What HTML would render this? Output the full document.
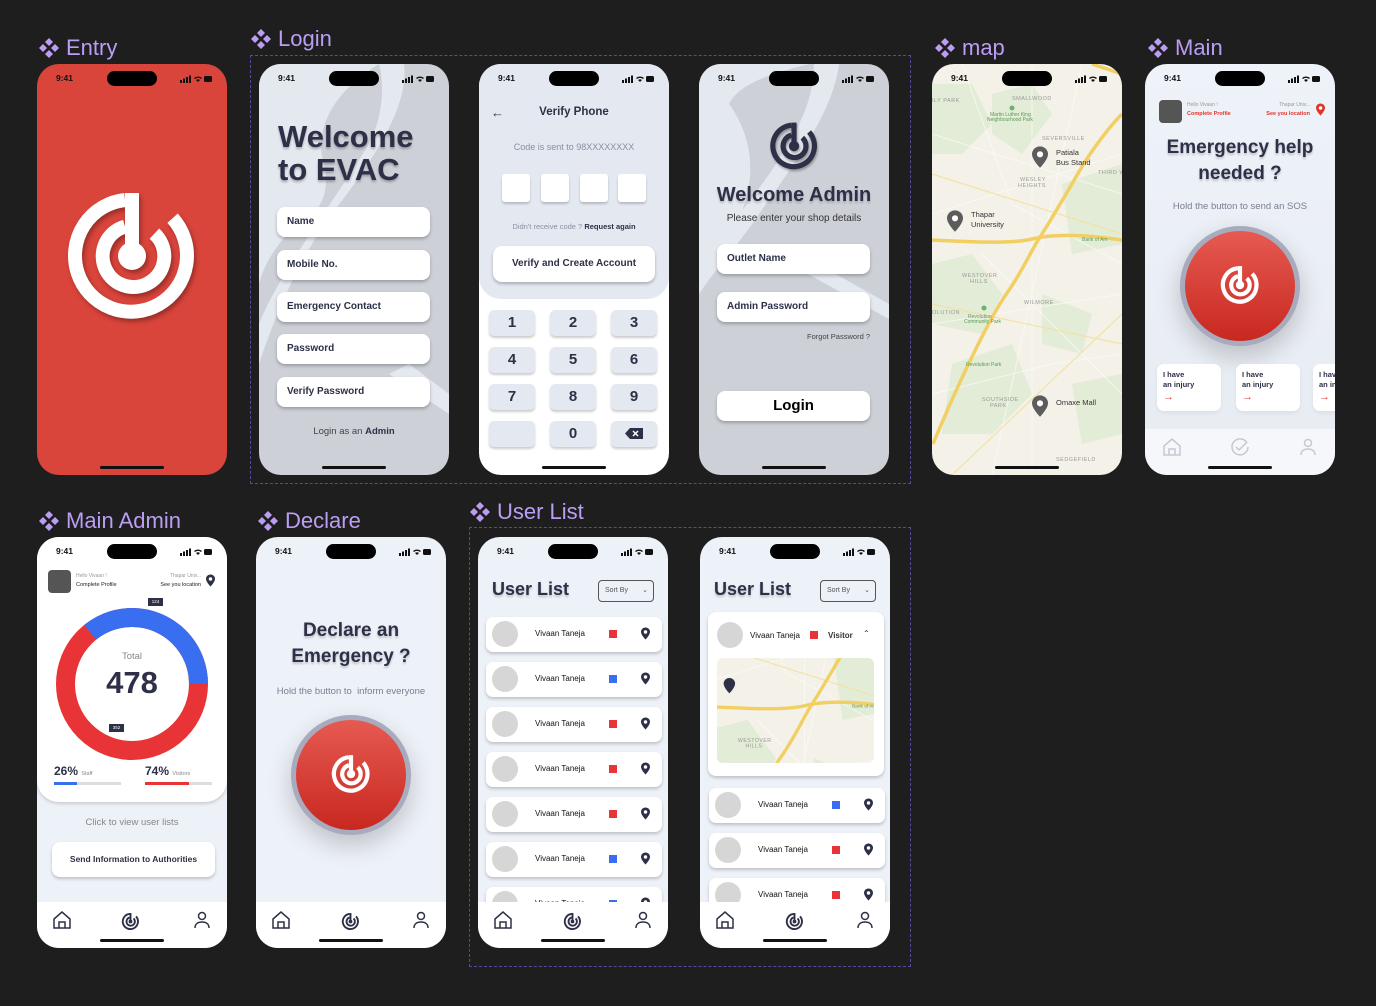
<!DOCTYPE html>
<html><head><meta charset="utf-8">
<style>
*{margin:0;padding:0;box-sizing:border-box}
body{width:1376px;height:1006px;background:#1e1e1e;position:relative;overflow:hidden;font-family:"Liberation Sans",sans-serif}
.lb{position:absolute;color:#bb9ef3;font-size:22px;display:flex;align-items:center;gap:6px;line-height:24px}
.lb svg{width:22px;height:22px}
.grp{position:absolute;border:1px dashed #5d45a0}
.ph{position:absolute;width:190px;height:411px;border-radius:22px;overflow:hidden;color:#2d3047}
.t{position:absolute;left:19px;top:9px;font-size:8.5px;font-weight:bold;color:#111;z-index:5}
.isl{position:absolute;left:70px;top:7px;width:50px;height:15px;border-radius:8px;background:#000;z-index:5}
.si{position:absolute;right:15px;top:11px;z-index:5}
.hi{position:absolute;left:63px;bottom:6px;width:64px;height:3px;border-radius:2px;background:#111;z-index:6}
.in{position:absolute;left:18px;width:153px;height:30px;background:#fff;border-radius:8px;box-shadow:0 2px 3px rgba(0,0,0,.25);font-size:10px;font-weight:bold;line-height:30px;padding-left:10px;color:#2d3047}
.key{position:absolute;width:46px;height:26px;background:#e4e8f0;border-radius:5px;box-shadow:0 2px 2px rgba(0,0,0,.2);font-size:15px;font-weight:bold;text-align:center;line-height:26px;color:#2d3047}
.nav{position:absolute;left:0;top:365px;width:190px;height:46px;background:#fff}
.nav svg{position:absolute;top:8px}
.row{position:absolute;left:8px;width:176px;height:35px;background:#fff;border-radius:7px;box-shadow:0 2px 3px rgba(0,0,0,.2)}
.row .av{position:absolute;left:6px;top:4px;width:26px;height:26px;border-radius:50%;background:#d6d6d6}
.row .nm{position:absolute;left:49px;top:12px;font-size:8px;color:#111}
.row .sq{position:absolute;left:123px;top:13px;width:8px;height:8px}
.row svg{position:absolute;left:155px;top:10px}
.card{position:absolute;width:64px;height:47px;background:#fff;border-radius:7px;font-size:7.5px;font-weight:bold;padding:6px 6px;line-height:10px;color:#2d3047;box-shadow:0 2px 4px rgba(0,0,0,.06)}
.card b{display:block;color:#e23a2f;font-size:11px;margin-top:2px}
</style></head><body>
<svg width="0" height="0" style="position:absolute">
<defs>
<symbol id="lg" viewBox="0 0 100 100"><g fill="none" stroke="currentColor" stroke-width="10"><path d="M45 10 A40 40 0 1 0 79 23"/><path d="M45 29 A22 22 0 1 0 66 34"/><path d="M50 5 V50"/></g><circle cx="50" cy="50" r="10" fill="currentColor"/></symbol>
<symbol id="dia" viewBox="0 0 22 22"><g fill="#bb9ef3"><path d="M11 1l4 4-4 4-4-4z"/><path d="M11 13l4 4-4 4-4-4z"/><path d="M5 7l4 4-4 4-4-4z"/><path d="M17 7l4 4-4 4-4-4z"/></g></symbol>
<symbol id="pin" viewBox="0 0 12 16"><path d="M6 0C2.7 0 0 2.6 0 5.8 0 10 6 16 6 16s6-6 6-10.2C12 2.6 9.3 0 6 0z" fill="currentColor"/><circle cx="6" cy="6" r="2.3" fill="#fff"/></symbol>
<symbol id="home" viewBox="0 0 20 20"><path d="M2 9L10 2l8 7v9H2z M7 18v-6h6v6" fill="none" stroke="currentColor" stroke-width="1.5"/></symbol>
<symbol id="usr" viewBox="0 0 20 20"><circle cx="10" cy="6" r="3.5" fill="none" stroke="currentColor" stroke-width="1.5"/><path d="M3 18c0-4 3-6 7-6s7 2 7 6" fill="none" stroke="currentColor" stroke-width="1.5"/></symbol>
<symbol id="chk" viewBox="0 0 20 20"><path d="M17 6A8 8 0 1 0 18 10" fill="none" stroke="currentColor" stroke-width="1.5"/><path d="M6 10l3 3 8-8" fill="none" stroke="currentColor" stroke-width="1.5"/></symbol>
<symbol id="sb" viewBox="0 0 32 8"><g fill="#111"><rect x="0" y="5" width="2" height="3"/><rect x="3" y="3.5" width="2" height="4.5"/><rect x="6" y="2" width="2" height="6"/><rect x="9" y="0.5" width="2" height="7.5"/><path d="M14 3a6 6 0 0 1 8 0l-1 1a4.5 4.5 0 0 0-6 0z M16 5a3 3 0 0 1 4 0l-2 2z"/><rect x="24" y="1" width="8" height="6" rx="1.5"/></g></symbol>
<g id="mapg">
<rect width="190" height="411" fill="#f4f1e8"/>
<g fill="#e2ecd6"><path d="M0 20h40l20 40-30 30H0z"/><path d="M60 30l40-10 20 30-30 40-30-20z"/><path d="M130 120l60-20v80l-50 10z"/><path d="M0 200l40-10 30 40-20 40-50-10z"/><path d="M20 300l60-20 20 50-40 40H10z"/><path d="M110 230l50 20-10 40-40-10z"/><path d="M140 320l50-10v60l-40 10z"/></g>
<g fill="none" stroke="#fbfaf6" stroke-width="1" opacity=".8"><path d="M0 70L190 130"/><path d="M30 0L80 140 190 200"/><path d="M0 260L190 230"/><path d="M50 190L190 330"/><path d="M0 330L120 300 190 290"/><path d="M100 0V411"/><path d="M0 150L190 90"/><path d="M150 0L60 411"/></g>
<g fill="none" stroke="#f3e2a6" stroke-width="1.2"><path d="M0 110L190 170"/><path d="M20 411L190 250"/><path d="M0 240L190 280"/></g>
<g fill="none" stroke="#f1cf63" stroke-width="3.5"><path d="M1 380C30 310 60 250 75 229S100 185 108 173 140 120 148 106 175 65 190 50"/><path d="M0 176C40 178 80 180 100 175S150 170 190 176"/><path d="M190 10L160 0"/></g>
<g font-size="5.5" fill="#999" font-family="Liberation Sans,sans-serif" letter-spacing=".5"><text x="80" y="36">SMALLWOOD</text><text x="110" y="76">SEVERSVILLE</text><text x="88" y="117">WESLEY</text><text x="86" y="123">HEIGHTS</text><text x="30" y="213">WESTOVER</text><text x="38" y="219">HILLS</text><text x="92" y="240">WILMORE</text><text x="0" y="250">OLUTION</text><text x="50" y="337">SOUTHSIDE</text><text x="58" y="343">PARK</text><text x="124" y="397">SEDGEFIELD</text><text x="0" y="38">ILY PARK</text><text x="166" y="110">THIRD W</text></g>
<g font-size="5" fill="#5a9a5a" font-family="Liberation Sans,sans-serif"><text x="58" y="52">Martin Luther King</text><text x="55" y="57">Neighbourhood Park</text><text x="36" y="254">Revolution</text><text x="32" y="259">Community Park</text><text x="34" y="302">Revolution Park</text><circle cx="80" cy="44" r="2.5" fill="#6bb26b"/><circle cx="52" cy="244" r="2.5" fill="#6bb26b"/><text x="150" y="177">Bank of Am</text></g>
</g>
</defs></svg>

<div class="lb" style="left:38px;top:36px"><svg><use href="#dia"/></svg>Entry</div>
<div class="lb" style="left:250px;top:27px"><svg><use href="#dia"/></svg>Login</div>
<div class="lb" style="left:934px;top:36px"><svg><use href="#dia"/></svg>map</div>
<div class="lb" style="left:1147px;top:36px"><svg><use href="#dia"/></svg>Main</div>
<div class="lb" style="left:38px;top:509px"><svg><use href="#dia"/></svg>Main Admin</div>
<div class="lb" style="left:257px;top:509px"><svg><use href="#dia"/></svg>Declare</div>
<div class="lb" style="left:469px;top:500px"><svg><use href="#dia"/></svg>User List</div>
<div class="grp" style="left:250px;top:55px;width:661px;height:429px"></div>
<div class="grp" style="left:469px;top:527px;width:442px;height:440px"></div>

<div class="ph" style="left:37px;top:64px;background:#d9443b">
<span class="t">9:41</span><i class="isl"></i><svg class="si" width="32" height="8"><use href="#sb"/></svg>
<svg style="position:absolute;left:25px;top:122px;color:#fff;filter:drop-shadow(2px 3px 2px rgba(0,0,0,.3))" width="140" height="140"><use href="#lg"/></svg>
<i class="hi"></i></div>

<div class="ph" style="left:259px;top:64px;background:#cdd0d7">
<svg style="position:absolute;left:0;top:0" width="190" height="411"><path d="M0 0H120C70 30 55 70 65 100 72 130 60 150 40 160 20 175 5 200 0 220Z" fill="#e4e8ef"/><path d="M120 0H145C150 40 120 90 65 160 40 200 20 240 0 300V260C20 210 60 160 110 80 125 50 125 20 120 0Z" fill="#e4e8ef"/><path d="M150 300L190 330V350L130 310Z" fill="#e4e8ef"/></svg>
<span class="t">9:41</span><i class="isl"></i><svg class="si" width="32" height="8"><use href="#sb"/></svg>
<div style="position:absolute;left:19px;top:56px;font-size:31px;font-weight:bold;line-height:33px;color:#2d3047;text-shadow:0 2px 2px rgba(0,0,0,.25)">Welcome<br>to EVAC</div>
<div class="in" style="top:143px">Name</div>
<div class="in" style="top:186px">Mobile No.</div>
<div class="in" style="top:228px">Emergency Contact</div>
<div class="in" style="top:270px">Password</div>
<div class="in" style="top:313px">Verify Password</div>
<div style="position:absolute;left:0;width:190px;top:362px;text-align:center;font-size:9.5px;color:#444">Login as an <b style="color:#2d3047">Admin</b></div>
<i class="hi"></i></div>

<div class="ph" style="left:479px;top:64px;background:#fff">
<div style="position:absolute;left:0;top:0;width:190px;height:235px;background:#e4e8f0;border-radius:0 0 22px 22px"></div>
<span class="t">9:41</span><i class="isl"></i><svg class="si" width="32" height="8"><use href="#sb"/></svg>
<div style="position:absolute;left:12px;top:41px;font-size:13px;color:#333">&#8592;</div>
<div style="position:absolute;left:0;width:190px;top:42px;text-align:center;font-size:11.5px;font-weight:bold">Verify Phone</div>
<div style="position:absolute;left:0;width:190px;top:78px;text-align:center;font-size:9px;color:#8a8ea0">Code is sent to 98XXXXXXXX</div>
<div style="position:absolute;left:23px;top:110px;width:28px;height:28px;background:#fff;border-radius:3px;box-shadow:0 2px 2px rgba(0,0,0,.2)"></div>
<div style="position:absolute;left:62px;top:110px;width:28px;height:28px;background:#fff;border-radius:3px;box-shadow:0 2px 2px rgba(0,0,0,.2)"></div>
<div style="position:absolute;left:101px;top:110px;width:28px;height:28px;background:#fff;border-radius:3px;box-shadow:0 2px 2px rgba(0,0,0,.2)"></div>
<div style="position:absolute;left:139px;top:110px;width:28px;height:28px;background:#fff;border-radius:3px;box-shadow:0 2px 2px rgba(0,0,0,.2)"></div>
<div style="position:absolute;left:0;width:190px;top:158px;text-align:center;font-size:7.5px;color:#8a8ea0">Didn't receive code ? <b style="color:#2d3047">Request again</b></div>
<div style="position:absolute;left:14px;top:182px;width:162px;height:36px;background:#fff;border-radius:9px;box-shadow:0 2px 3px rgba(0,0,0,.25);text-align:center;line-height:36px;font-size:10px;font-weight:bold">Verify and Create Account</div>
<div class="key" style="left:10px;top:246px">1</div><div class="key" style="left:71px;top:246px">2</div><div class="key" style="left:132px;top:246px">3</div>
<div class="key" style="left:10px;top:283px">4</div><div class="key" style="left:71px;top:283px">5</div><div class="key" style="left:132px;top:283px">6</div>
<div class="key" style="left:10px;top:320px">7</div><div class="key" style="left:71px;top:320px">8</div><div class="key" style="left:132px;top:320px">9</div>
<div class="key" style="left:10px;top:357px"></div><div class="key" style="left:71px;top:357px">0</div><div class="key" style="left:132px;top:357px"><svg width="18" height="11" style="margin-top:7px"><path d="M5 0H18V11H5L0 5.5Z" fill="#2d3047"/><path d="M8 3l5 5M13 3l-5 5" stroke="#fff" stroke-width="1.5"/></svg></div>
<i class="hi"></i></div>

<div class="ph" style="left:699px;top:64px;background:#cdd0d7">
<svg style="position:absolute;left:0;top:0" width="190" height="411"><path d="M0 0H110C70 10 40 20 30 40 45 60 55 90 50 120 45 150 35 170 15 190 5 200 0 220 0 230Z" fill="#e4e8ef"/><path d="M115 0H140C135 40 110 80 60 150 40 180 20 200 0 230V200C30 160 70 120 100 60 110 40 115 20 115 0Z" fill="#e4e8ef"/><path d="M110 195L190 240V255L100 205Z" fill="#e4e8ef"/></svg>
<span class="t">9:41</span><i class="isl"></i><svg class="si" width="32" height="8"><use href="#sb"/></svg>
<svg style="position:absolute;left:69px;top:56px;color:#2d3047;filter:drop-shadow(1px 2px 1px rgba(0,0,0,.3))" width="52" height="52"><use href="#lg"/></svg>
<div style="position:absolute;left:0;width:190px;top:120px;text-align:center;font-size:20px;font-weight:bold;text-shadow:0 2px 2px rgba(0,0,0,.2)">Welcome Admin</div>
<div style="position:absolute;left:0;width:190px;top:149px;text-align:center;font-size:10px;color:#333">Please enter your shop details</div>
<div class="in" style="top:180px">Outlet Name</div>
<div class="in" style="top:228px">Admin Password</div>
<div style="position:absolute;right:19px;top:268px;font-size:7.5px;color:#444">Forgot Password ?</div>
<div style="position:absolute;left:18px;top:327px;width:153px;height:30px;background:#fff;border-radius:8px;box-shadow:0 2px 3px rgba(0,0,0,.25);text-align:center;line-height:30px;font-size:15px;font-weight:bold;color:#000">Login</div>
<i class="hi"></i></div>

<div class="ph" style="left:932px;top:64px">
<svg style="position:absolute;left:0;top:0" width="190" height="411"><use href="#mapg"/></svg>
<span class="t">9:41</span><i class="isl"></i><svg class="si" width="32" height="8"><use href="#sb"/></svg>
<svg style="position:absolute;left:100px;top:82px;color:#5c5c5c" width="16" height="22"><use href="#pin"/></svg>
<div style="position:absolute;left:124px;top:84px;font-size:7.5px;line-height:10px;color:#333">Patiala<br>Bus Stand</div>
<svg style="position:absolute;left:15px;top:146px;color:#5c5c5c" width="16" height="22"><use href="#pin"/></svg>
<div style="position:absolute;left:39px;top:146px;font-size:7.5px;line-height:10px;color:#333">Thapar<br>University</div>
<svg style="position:absolute;left:100px;top:331px;color:#5c5c5c" width="16" height="22"><use href="#pin"/></svg>
<div style="position:absolute;left:124px;top:334px;font-size:7.5px;color:#333">Omaxe Mall</div>
<i class="hi"></i></div>

<div class="ph" style="left:1145px;top:64px;background:linear-gradient(#eef2f9,#e7ebf2)">
<span class="t">9:41</span><i class="isl"></i><svg class="si" width="32" height="8"><use href="#sb"/></svg>
<div style="position:absolute;left:14px;top:36px;width:23px;height:23px;border-radius:4px;background:#555"></div>
<div style="position:absolute;left:42px;top:38px;font-size:5px;color:#999">Hello Vivaan !</div>
<div style="position:absolute;left:42px;top:47px;font-size:5.5px;color:#e2352b;font-weight:bold">Complete Profile</div>
<div style="position:absolute;right:25px;top:38px;font-size:5px;color:#999">Thapar Univ...</div>
<div style="position:absolute;right:25px;top:47px;font-size:5.5px;color:#e2352b;font-weight:bold">See you location</div>
<svg style="position:absolute;left:171px;top:39px;color:#e2352b" width="9" height="13"><use href="#pin"/></svg>
<div style="position:absolute;left:0;width:190px;top:71px;text-align:center;font-size:19px;font-weight:bold;line-height:26px;text-shadow:0 2px 2px rgba(0,0,0,.2)">Emergency help<br>needed ?</div>
<div style="position:absolute;left:0;width:190px;top:137px;text-align:center;font-size:9.5px;color:#7a7e92">Hold the button to send an SOS</div>
<div style="position:absolute;left:35px;top:162px;width:120px;height:120px;border-radius:50%;background:#a8abbd;box-shadow:0 10px 25px rgba(0,0,0,.2)"></div>
<div style="position:absolute;left:40px;top:167px;width:110px;height:110px;border-radius:50%;background:linear-gradient(#e65a52,#c8281f)"></div>
<svg style="position:absolute;left:74px;top:200px;color:#fff" width="42" height="42"><use href="#lg"/></svg>
<div class="card" style="left:12px;top:300px">I have<br>an injury<b>&#8594;</b></div>
<div class="card" style="left:91px;top:300px">I have<br>an injury<b>&#8594;</b></div>
<div class="card" style="left:168px;top:300px">I have<br>an injury<b>&#8594;</b></div>
<div class="nav" style="background:#f6f7fa"><svg style="left:17px;color:#c5c8d2" width="20" height="20"><use href="#home"/></svg><svg style="left:85px;color:#c5c8d2" width="20" height="20"><use href="#chk"/></svg><svg style="left:153px;color:#c5c8d2" width="20" height="20"><use href="#usr"/></svg></div>
<i class="hi"></i></div>

<div class="ph" style="left:37px;top:537px;background:#edf1f8">
<div style="position:absolute;left:0;top:0;width:190px;height:265px;background:#fff;border-radius:0 0 22px 22px;box-shadow:0 2px 3px rgba(0,0,0,.15)"></div>
<span class="t">9:41</span><i class="isl"></i><svg class="si" width="32" height="8"><use href="#sb"/></svg>
<div style="position:absolute;left:11px;top:33px;width:23px;height:23px;border-radius:4px;background:#555"></div>
<div style="position:absolute;left:39px;top:36px;font-size:5px;color:#999">Hello Vivaan !</div>
<div style="position:absolute;left:39px;top:45px;font-size:5.5px;color:#222">Complete Profile</div>
<div style="position:absolute;right:26px;top:36px;font-size:5px;color:#999">Thapar Univ...</div>
<div style="position:absolute;right:26px;top:45px;font-size:5.5px;color:#222">See you location</div>
<svg style="position:absolute;left:169px;top:37px;color:#2d3047" width="9" height="13"><use href="#pin"/></svg>
<svg style="position:absolute;left:15px;top:67px" width="160" height="160"><circle cx="80" cy="80" r="66.5" fill="none" stroke="#e83436" stroke-width="19"/><circle cx="80" cy="80" r="66.5" fill="none" stroke="#3a6ef0" stroke-width="19" stroke-dasharray="149.7 500" transform="rotate(-129 80 80)"/></svg>
<div style="position:absolute;left:0;width:190px;top:114px;text-align:center;font-size:9.5px;color:#888">Total</div>
<div style="position:absolute;left:0;width:190px;top:128px;text-align:center;font-size:31px;font-weight:bold;color:#2d3047">478</div>
<div style="position:absolute;left:111px;top:61px;width:15px;height:8px;background:#2d3047;color:#fff;font-size:4.5px;text-align:center;line-height:8px">124</div>
<div style="position:absolute;left:72px;top:187px;width:15px;height:8px;background:#2d3047;color:#fff;font-size:4.5px;text-align:center;line-height:8px">352</div>
<div style="position:absolute;left:17px;top:227px;font-size:12px;font-weight:bold">26% <span style="font-size:5.5px;font-weight:normal;color:#888">Staff</span></div>
<div style="position:absolute;left:17px;top:245px;width:67px;height:3px;background:#ddd"><i style="display:block;width:23px;height:3px;background:#3a6ef0"></i></div>
<div style="position:absolute;left:108px;top:227px;font-size:12px;font-weight:bold">74% <span style="font-size:5.5px;font-weight:normal;color:#888">Visitors</span></div>
<div style="position:absolute;left:108px;top:245px;width:67px;height:3px;background:#ddd"><i style="display:block;width:44px;height:3px;background:#e83436"></i></div>
<div style="position:absolute;left:0;width:190px;top:280px;text-align:center;font-size:9.5px;color:#888">Click to view user lists</div>
<div style="position:absolute;left:15px;top:305px;width:163px;height:35px;background:#fff;border-radius:8px;box-shadow:0 2px 3px rgba(0,0,0,.2);text-align:center;line-height:35px;font-size:8.5px;font-weight:bold">Send Information to Authorities</div>
<div class="nav"><svg style="left:15px;color:#2d3047" width="20" height="20"><use href="#home"/></svg><svg style="left:84px;top:10px;color:#2d3047" width="19" height="19"><use href="#lg"/></svg><svg style="left:155px;color:#2d3047" width="20" height="20"><use href="#usr"/></svg></div>
<i class="hi"></i></div>

<div class="ph" style="left:256px;top:537px;background:#edf1f8">
<span class="t">9:41</span><i class="isl"></i><svg class="si" width="32" height="8"><use href="#sb"/></svg>
<div style="position:absolute;left:0;width:190px;top:81px;text-align:center;font-size:19px;font-weight:bold;line-height:26px;text-shadow:0 2px 2px rgba(0,0,0,.2)">Declare an<br>Emergency ?</div>
<div style="position:absolute;left:0;width:190px;top:149px;text-align:center;font-size:9.5px;color:#7a7e92">Hold the button to &nbsp;inform everyone</div>
<div style="position:absolute;left:35px;top:178px;width:120px;height:120px;border-radius:50%;background:#a8abbd;box-shadow:0 10px 25px rgba(0,0,0,.2)"></div>
<div style="position:absolute;left:40px;top:183px;width:110px;height:110px;border-radius:50%;background:linear-gradient(#e65a52,#c8281f)"></div>
<svg style="position:absolute;left:74px;top:216px;color:#fff" width="42" height="42"><use href="#lg"/></svg>
<div class="nav"><svg style="left:15px;color:#2d3047" width="20" height="20"><use href="#home"/></svg><svg style="left:85px;top:10px;color:#2d3047" width="19" height="19"><use href="#lg"/></svg><svg style="left:155px;color:#2d3047" width="20" height="20"><use href="#usr"/></svg></div>
<i class="hi"></i></div>

<div class="ph" style="left:478px;top:537px;background:#edf1f8">
<span class="t">9:41</span><i class="isl"></i><svg class="si" width="32" height="8"><use href="#sb"/></svg>
<div style="position:absolute;left:14px;top:42px;font-size:18px;font-weight:bold;text-shadow:0 2px 2px rgba(0,0,0,.2)">User List</div>
<div style="position:absolute;left:120px;top:43px;width:56px;height:22px;border:1px solid #555;border-radius:4px;font-size:7px;line-height:20px;padding-left:6px;color:#555">Sort By <span style="position:absolute;right:5px">&#8964;</span></div>
<div class="row" style="top:80px"><i class="av"></i><span class="nm">Vivaan Taneja</span><i class="sq" style="background:#e83436"></i><svg width="9" height="13" style="color:#2d3047"><use href="#pin"/></svg></div>
<div class="row" style="top:125px"><i class="av"></i><span class="nm">Vivaan Taneja</span><i class="sq" style="background:#3a6ef0"></i><svg width="9" height="13" style="color:#2d3047"><use href="#pin"/></svg></div>
<div class="row" style="top:170px"><i class="av"></i><span class="nm">Vivaan Taneja</span><i class="sq" style="background:#e83436"></i><svg width="9" height="13" style="color:#2d3047"><use href="#pin"/></svg></div>
<div class="row" style="top:215px"><i class="av"></i><span class="nm">Vivaan Taneja</span><i class="sq" style="background:#e83436"></i><svg width="9" height="13" style="color:#2d3047"><use href="#pin"/></svg></div>
<div class="row" style="top:260px"><i class="av"></i><span class="nm">Vivaan Taneja</span><i class="sq" style="background:#e83436"></i><svg width="9" height="13" style="color:#2d3047"><use href="#pin"/></svg></div>
<div class="row" style="top:305px"><i class="av"></i><span class="nm">Vivaan Taneja</span><i class="sq" style="background:#3a6ef0"></i><svg width="9" height="13" style="color:#2d3047"><use href="#pin"/></svg></div>
<div class="row" style="top:350px"><i class="av"></i><span class="nm">Vivaan Taneja</span><i class="sq" style="background:#3a6ef0"></i><svg width="9" height="13" style="color:#2d3047"><use href="#pin"/></svg></div>
<div class="nav"><svg style="left:15px;color:#2d3047" width="20" height="20"><use href="#home"/></svg><svg style="left:85px;top:10px;color:#2d3047" width="19" height="19"><use href="#lg"/></svg><svg style="left:155px;color:#2d3047" width="20" height="20"><use href="#usr"/></svg></div>
<i class="hi"></i></div>

<div class="ph" style="left:700px;top:537px;background:#edf1f8">
<span class="t">9:41</span><i class="isl"></i><svg class="si" width="32" height="8"><use href="#sb"/></svg>
<div style="position:absolute;left:14px;top:42px;font-size:18px;font-weight:bold;text-shadow:0 2px 2px rgba(0,0,0,.2)">User List</div>
<div style="position:absolute;left:120px;top:43px;width:56px;height:22px;border:1px solid #555;border-radius:4px;font-size:7px;line-height:20px;padding-left:6px;color:#555">Sort By <span style="position:absolute;right:5px">&#8964;</span></div>
<div style="position:absolute;left:8px;top:75px;width:176px;height:164px;background:#fff;border-radius:8px;box-shadow:0 2px 3px rgba(0,0,0,.2)">
<i style="position:absolute;left:9px;top:10px;width:26px;height:26px;border-radius:50%;background:#d6d6d6"></i>
<span style="position:absolute;left:42px;top:19px;font-size:8px;color:#111">Vivaan Taneja</span>
<i style="position:absolute;left:102px;top:19px;width:8px;height:8px;background:#e83436"></i>
<span style="position:absolute;left:120px;top:19px;font-size:8px;color:#333;font-weight:bold">Visitor</span>
<span style="position:absolute;left:155px;top:17px;font-size:8px;color:#333">&#8963;</span>
<svg style="position:absolute;left:9px;top:46px;border-radius:6px" width="157" height="105" viewBox="8 125 165 110" preserveAspectRatio="none"><use href="#mapg"/><g transform="translate(15 146)" fill="#2d3047"><path d="M6 0C2.7 0 0 2.6 0 5.8 0 10 6 16 6 16s6-6 6-10.2C12 2.6 9.3 0 6 0z"/></g></svg>
</div>
<div class="row" style="top:251px;left:9px"><i class="av"></i><span class="nm">Vivaan Taneja</span><i class="sq" style="background:#3a6ef0"></i><svg width="9" height="13" style="color:#2d3047"><use href="#pin"/></svg></div>
<div class="row" style="top:296px;left:9px"><i class="av"></i><span class="nm">Vivaan Taneja</span><i class="sq" style="background:#e83436"></i><svg width="9" height="13" style="color:#2d3047"><use href="#pin"/></svg></div>
<div class="row" style="top:341px;left:9px"><i class="av"></i><span class="nm">Vivaan Taneja</span><i class="sq" style="background:#e83436"></i><svg width="9" height="13" style="color:#2d3047"><use href="#pin"/></svg></div>
<div class="nav"><svg style="left:15px;color:#2d3047" width="20" height="20"><use href="#home"/></svg><svg style="left:85px;top:10px;color:#2d3047" width="19" height="19"><use href="#lg"/></svg><svg style="left:155px;color:#2d3047" width="20" height="20"><use href="#usr"/></svg></div>
<i class="hi"></i></div>
</body></html>
